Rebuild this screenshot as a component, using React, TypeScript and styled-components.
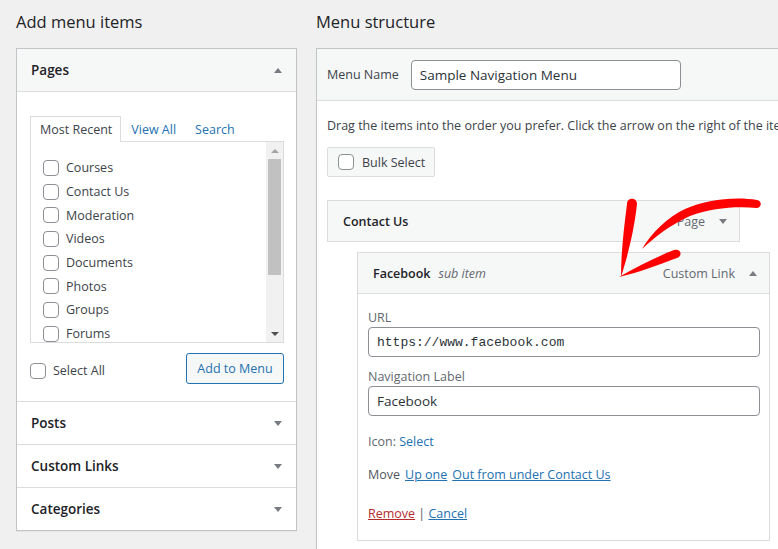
import React from 'react';
import styled, { createGlobalStyle } from 'styled-components';

const GlobalStyle = createGlobalStyle`
  html, body { margin: 0; padding: 0; background: #f0f0f1; overflow: hidden; }
  body {
    font-family: "Open Sans", "Noto Sans", "Liberation Sans", sans-serif;
    font-size: 12.5px;
    color: #3c434a;
  }
  * { box-sizing: border-box; }
`;

const Page = styled.div`
  position: relative;
  display: flex;
  gap: 19px;
  padding: 10px 0 0 16px;
  width: 778px;
  height: 549px;
  overflow: hidden;
`;

const Column = styled.div<{ $width: number }>`
  display: flex;
  flex-direction: column;
  width: ${p => p.$width}px;
  flex-shrink: 0;
`;

const Heading = styled.h2`
  margin: 0 0 14px;
  font-size: 16.5px;
  line-height: 24px;
  font-weight: 400;
  color: #1d2327;
`;

const Panel = styled.div`
  background: #fff;
  border: 1px solid #c3c4c7;
  box-shadow: 0 1px 1px rgba(0, 0, 0, 0.04);
`;

const SectionHeader = styled.div<{ $open?: boolean; $last?: boolean }>`
  height: ${p => (p.$last ? 42 : 43)}px;
  display: flex;
  align-items: center;
  justify-content: space-between;
  padding: 0 14px;
  background: ${p => (p.$open ? '#f6f7f7' : '#fff')};
  border-bottom: ${p => (p.$last ? 'none' : '1px solid #dcdcde')};
  font-size: 13.5px;
  font-weight: 600;
  color: #1d2327;
`;

const Caret = styled.span<{ $up?: boolean }>`
  width: 0;
  height: 0;
  border-left: 4.5px solid transparent;
  border-right: 4.5px solid transparent;
  ${p => (p.$up ? 'border-bottom: 5px solid #787c82;' : 'border-top: 5px solid #787c82;')}
`;

const SectionBody = styled.div`
  padding: 24px 12px 17px 13px;
  border-bottom: 1px solid #dcdcde;
`;

const Tabs = styled.div`
  display: flex;
  align-items: flex-end;
  margin-bottom: -1px;
  position: relative;
  z-index: 1;
`;

const Tab = styled.span<{ $active?: boolean }>`
  height: 26px;
  display: flex;
  align-items: center;
  padding: 0 8px 0 9px;
  color: ${p => (p.$active ? '#3c434a' : '#2271b1')};
  background: ${p => (p.$active ? '#fff' : 'transparent')};
  border: 1px solid ${p => (p.$active ? '#dcdcde' : 'transparent')};
  border-bottom: none;
`;

const TabPanel = styled.div`
  height: 202px;
  border: 1px solid #dcdcde;
  display: flex;
`;

const List = styled.div`
  flex: 1;
  overflow: hidden;
  padding: 14px 0 0 12px;
`;

const ListItem = styled.label`
  height: 23.7px;
  display: flex;
  align-items: center;
  gap: 7px;
  color: #3c434a;
`;

const Checkbox = styled.input.attrs({ type: 'checkbox' })`
  appearance: none;
  -webkit-appearance: none;
  width: 16px;
  height: 16px;
  margin: 0;
  flex-shrink: 0;
  border: 1px solid #8c8f94;
  border-radius: 4px;
  background: #fff;
`;

const ScrollTrack = styled.div`
  width: 17px;
  background: #f1f1f1;
  display: flex;
  flex-direction: column;
  align-items: center;
`;

const ScrollArrow = styled.div<{ $down?: boolean }>`
  height: 17px;
  display: flex;
  align-items: center;
  justify-content: center;
  &::after {
    content: '';
    border-left: 4px solid transparent;
    border-right: 4px solid transparent;
    ${p => (p.$down ? 'border-top: 4px solid #505050;' : 'border-bottom: 4px solid #a3a3a3;')}
  }
`;

const ScrollThumb = styled.div`
  width: 13px;
  height: 116px;
  background: #c1c1c1;
`;

const ScrollSpacer = styled.div`
  flex: 1;
`;

const BottomRow = styled.div`
  display: flex;
  justify-content: space-between;
  align-items: center;
  margin-top: 10px;
`;

const SelectAll = styled.label`
  display: flex;
  align-items: center;
  gap: 7px;
  margin-top: 4px;
  white-space: nowrap;
`;

const OutlineButton = styled.button`
  height: 31px;
  width: 98px;
  padding: 0;
  border: 1px solid #2271b1;
  border-radius: 3px;
  background: #f6f7f7;
  color: #2271b1;
  font: inherit;
  font-size: 12.5px;
  white-space: nowrap;
`;

const MenuPanel = styled(Panel)`
  border-right: none;
  padding-bottom: 40px;
`;

const MenuHeader = styled.div`
  height: 52px;
  display: flex;
  align-items: center;
  gap: 12px;
  padding: 0 10px;
  background: #f6f7f7;
  border-bottom: 1px solid #dcdcde;
  white-space: nowrap;
`;

const TextInput = styled.div<{ $width: number; $mono?: boolean }>`
  width: ${p => p.$width}px;
  height: 30px;
  display: flex;
  align-items: center;
  padding: 0 8px;
  border: 1px solid #8c8f94;
  border-radius: 4px;
  background: #fff;
  color: #2c3338;
  font-size: ${p => (p.$mono ? 13 : 13.5)}px;
  font-family: ${p => (p.$mono ? '"Liberation Mono", "DejaVu Sans Mono", monospace' : 'inherit')};
  white-space: nowrap;
`;

const MenuBody = styled.div`
  padding: 0 10px;
`;

const Instructions = styled.p`
  margin: 15px 0 0;
  line-height: 20px;
  white-space: nowrap;
`;

const BulkButton = styled.div`
  margin-top: 11px;
  width: 108px;
  height: 30px;
  display: flex;
  align-items: center;
  gap: 8px;
  padding: 0 0 0 10px;
  background: #f6f7f7;
  border: 1px solid #dcdcde;
  border-radius: 2px;
  white-space: nowrap;
`;

const ItemBar = styled.div<{ $indent?: boolean }>`
  width: 413px;
  margin-left: ${p => (p.$indent ? 30 : 0)}px;
  margin-top: ${p => (p.$indent ? 10 : 23)}px;
  border: 1px solid #dcdcde;
  background: #fff;
`;

const ItemHead = styled.div<{ $open?: boolean }>`
  height: ${p => (p.$open ? 41 : 40)}px;
  display: flex;
  align-items: center;
  padding: 0 12px 0 15px;
  background: #f6f7f7;
  border-bottom: ${p => (p.$open ? '1px solid #dcdcde' : 'none')};
  white-space: nowrap;
`;

const ItemTitle = styled.span`
  font-weight: 600;
  color: #1d2327;
`;

const SubNote = styled.span`
  font-style: italic;
  color: #646970;
  margin-left: 8px;
`;

const ItemType = styled.span`
  margin-left: auto;
  margin-right: 14px;
  color: #646970;
`;

const ItemBody = styled.div`
  padding: 14px 9px 16px 10px;
`;

const FieldLabel = styled.div<{ $gap?: number }>`
  margin-top: ${p => p.$gap ?? 0}px;
  line-height: 19px;
  color: #646970;
`;

const Line = styled.div<{ $gap: number }>`
  margin-top: ${p => p.$gap}px;
  line-height: 20px;
  display: flex;
  gap: 5px;
  color: #50575e;
  white-space: nowrap;
`;

const Muted = styled.span`
  color: #646970;
`;

const Link = styled.a<{ $danger?: boolean; $plain?: boolean }>`
  color: ${p => (p.$danger ? '#b32d2e' : '#2271b1')};
  text-decoration: ${p => (p.$plain ? 'none' : 'underline')};
`;

const Overlay = styled.svg`
  position: absolute;
  left: 0;
  top: 0;
  pointer-events: none;
`;

const pages = ['Courses', 'Contact Us', 'Moderation', 'Videos', 'Documents', 'Photos', 'Groups', 'Forums'];

export default function App() {
  return (
    <>
      <GlobalStyle />
      <Page>
        <Column $width={281}>
          <Heading>Add menu items</Heading>
          <Panel>
            <SectionHeader $open>
              Pages <Caret $up />
            </SectionHeader>
            <SectionBody>
              <Tabs>
                <Tab $active>Most Recent</Tab>
                <Tab>View All</Tab>
                <Tab>Search</Tab>
              </Tabs>
              <TabPanel>
                <List>
                  {pages.map(p => (
                    <ListItem key={p}>
                      <Checkbox />
                      {p}
                    </ListItem>
                  ))}
                </List>
                <ScrollTrack>
                  <ScrollArrow />
                  <ScrollThumb />
                  <ScrollSpacer />
                  <ScrollArrow $down />
                </ScrollTrack>
              </TabPanel>
              <BottomRow>
                <SelectAll>
                  <Checkbox />
                  Select All
                </SelectAll>
                <OutlineButton>Add to Menu</OutlineButton>
              </BottomRow>
            </SectionBody>
            <SectionHeader>
              Posts <Caret />
            </SectionHeader>
            <SectionHeader>
              Custom Links <Caret />
            </SectionHeader>
            <SectionHeader $last>
              Categories <Caret />
            </SectionHeader>
          </Panel>
        </Column>
        <Column $width={520}>
          <Heading>Menu structure</Heading>
          <MenuPanel>
            <MenuHeader>
              Menu Name
              <TextInput $width={270}>Sample Navigation Menu</TextInput>
            </MenuHeader>
            <MenuBody>
              <Instructions>
                Drag the items into the order you prefer. Click the arrow on the right of the item to reveal additional configuration options.
              </Instructions>
              <BulkButton>
                <Checkbox />
                Bulk Select
              </BulkButton>
              <ItemBar>
                <ItemHead>
                  <ItemTitle>Contact Us</ItemTitle>
                  <ItemType>Page</ItemType>
                  <Caret />
                </ItemHead>
              </ItemBar>
              <ItemBar $indent>
                <ItemHead $open>
                  <ItemTitle>Facebook</ItemTitle>
                  <SubNote>sub item</SubNote>
                  <ItemType>Custom Link</ItemType>
                  <Caret $up />
                </ItemHead>
                <ItemBody>
                  <FieldLabel>URL</FieldLabel>
                  <TextInput $width={392} $mono>https://www.facebook.com</TextInput>
                  <FieldLabel $gap={10}>Navigation Label</FieldLabel>
                  <TextInput $width={392}>Facebook</TextInput>
                  <Line $gap={16}>
                    <span>
                      <Muted>Icon:</Muted> <Link $plain>Select</Link>
                    </span>
                  </Line>
                  <Line $gap={13}>
                    Move <Link>Up one</Link> <Link>Out from under Contact Us</Link>
                  </Line>
                  <Line $gap={19}>
                    <span>
                      <Link $danger>Remove</Link> | <Link>Cancel</Link>
                    </span>
                  </Line>
                </ItemBody>
              </ItemBar>
            </MenuBody>
          </MenuPanel>
        </Column>
        <Overlay width={778} height={549} viewBox="0 0 778 549">
          <path
            d="M757 200 C735 196 705 200 685 209 C668 217 652 232 642 249 C656 236 670 225 690 216 C712 208 735 206 757 208 C762 207 762 201 757 200 Z"
            fill="#f00"
          />
          <path
            d="M627 204 C627 197 637 197 637 204 C634 232 627 258 621 277 C621 252 624 228 627 204 Z"
            fill="#f00"
          />
          <path
            d="M619 277 C637 267 656 257 674 250 C681 248 683 256 677 258 C658 265 640 272 619 277 Z"
            fill="#f00"
          />
        </Overlay>
      </Page>
    </>
  );
}
